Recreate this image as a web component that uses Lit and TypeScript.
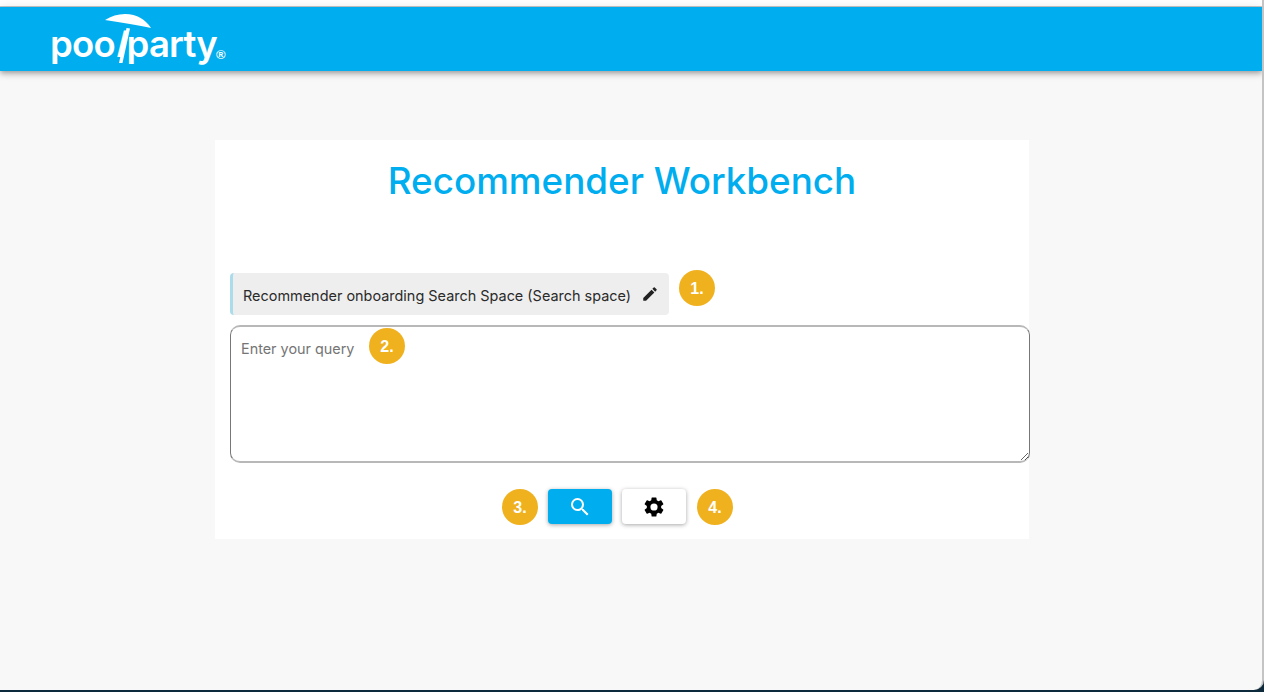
import { LitElement, html, css } from "lit";
import { customElement } from "lit/decorators.js";

@customElement("app-root")
export class AppRoot extends LitElement {
  static styles = css`
    :host { display: block; width: 1264px; height: 692px; overflow: hidden; background: #0d2a3c; font-family: Inter, "Liberation Sans", sans-serif; }
    .window { box-sizing: border-box; width: 1264px; height: 690px; background: #f8f8f8; border-right: 2px solid #c4c4c4; border-bottom-right-radius: 10px; display: flex; flex-direction: column; overflow: hidden; }
    .strip { height: 6px; background: #fff; border-bottom: 1px solid #c8c8c8; flex: none; }
    .bar { height: 64px; flex: none; background: #00aeef; box-shadow: 0 2px 4px -1px rgba(0,0,0,.2), 0 4px 5px 0 rgba(0,0,0,.14), 0 1px 10px 0 rgba(0,0,0,.12); padding-left: 50px; position: relative; z-index: 2; }
    .logo { position: relative; width: 176px; height: 64px; color: #fff; display: flex; align-items: baseline; padding-top: 13px; box-sizing: border-box; }
    .logo svg { position: absolute; left: 54px; top: 6px; }
    .word { font: 600 36.500px/48px Inter, sans-serif; letter-spacing: -0.8px; white-space: nowrap; }
    .pole { display: inline-block; transform: skewX(-14deg); transform-origin: 50% 75%; margin-right: 3px; }
    .reg { margin-left: -1px; font: 700 13px/10px "Liberation Sans", sans-serif; transform: translateY(2px); }
    main { flex: 1; padding: 69px 0 0 215px; }
    .card { box-sizing: border-box; position: relative; width: 814px; height: 399px; background: #fff; padding: 16px 0 0 15px; display: flex; flex-direction: column; }
    h1 { margin: 0; width: 784px; text-align: center; color: #00aeef; font: 500 36.800px/50px Inter, sans-serif; }
    .chip { box-sizing: border-box; margin-top: 67px; width: 439px; height: 42px; background: #eee; border-left: 3px solid #aadcec; border-radius: 4px; display: flex; align-items: center; padding: 2px 0 0 10px; gap: 10px; font-size: 14.440px; color: #2a2a2a; flex: none; }
    .chip svg { width: 18px; height: 18px; fill: #222; margin-top: -3px; }
    textarea { box-sizing: border-box; margin: 10px 0 0; width: 800px; height: 138px; flex: none; border: 1px solid #777; border-top: 2px solid #b8b8b8; border-bottom: 2px solid #b8b8b8; border-radius: 10px; padding: 13px 10px; font: 14.400px Inter, sans-serif; outline: none; background: #fff; display: block; }
    textarea::placeholder { color: #757575; opacity: 1; }
    .actions { display: flex; gap: 10px; margin: 26px 0 0 318px; }
    button { width: 64px; height: 35px; border: 0; border-radius: 4px; padding: 0; display: flex; align-items: center; justify-content: center; box-shadow: 0 1px 4px rgba(0,0,0,.35); background: #fff; }
    button.primary { background: #00aeef; }
    .badge { position: absolute; width: 36px; height: 36px; border-radius: 50%; background: #f0b11f; color: #fff; font: 700 16px/37px "Liberation Sans", sans-serif; text-align: center; }
    .b1 { left: 464px; top: 130px; }
    .b2 { left: 154px; top: 188px; }
    .b3 { left: 287px; top: 349px; }
    .b4 { left: 482px; top: 349px; }
  `;

  render() {
    return html`
      <div class="window">
        <div class="strip"></div>
        <header class="bar">
          <div class="logo">
            <span class="word">poo<span class="pole">l</span>party</span>
            <span class="reg">®</span>
            <svg width="56" height="56" viewBox="0 0 56 56">
              <path fill="#fff" d="M1 7 C7 3 14 1 21 1 C33 1 42 7 47 15 C35 12 18 10 1 7Z"/>
              <path fill="#fff" d="M22.500 15 L26 15.500 L18.500 50 L15 50Z" />
            </svg>
          </div>
        </header>
        <main>
          <section class="card">
            <h1>Recommender Workbench</h1>
            <div class="chip">
              <span>Recommender onboarding Search Space (Search space)</span>
              <svg viewBox="0 0 24 24"><path d="M3 17.250V21h3.750L17.810 9.940l-3.750-3.750L3 17.250zM20.710 7.040a1 1 0 0 0 0-1.410l-2.340-2.340a1 1 0 0 0-1.410 0l-1.830 1.830 3.750 3.750 1.830-1.830z"/></svg>
            </div>
            <textarea placeholder="Enter your query"></textarea>
            <div class="actions">
              <button class="primary" aria-label="Search">
                <svg width="24" height="24" viewBox="0 0 24 24" fill="#fff"><path d="M15.500 14h-.79l-.28-.27A6.470 6.470 0 0 0 16 9.500 6.500 6.500 0 1 0 9.500 16c1.610 0 3.090-.59 4.230-1.570l.27.28v.79l5 4.990L20.490 19l-4.990-5zm-6 0C7.010 14 5 11.990 5 9.500S7.010 5 9.500 5 14 7.010 14 9.500 11.990 14 9.500 14z"/></svg>
              </button>
              <button aria-label="Settings">
                <svg width="24" height="24" viewBox="0 0 24 24" fill="#000"><path d="M19.140 12.940c.04-.3.060-.61.060-.94 0-.32-.02-.64-.07-.94l2.030-1.580a.49.490 0 0 0 .12-.61l-1.920-3.320a.49.490 0 0 0-.59-.22l-2.390.96c-.5-.38-1.030-.7-1.620-.94l-.36-2.540a.48.480 0 0 0-.48-.41h-3.840a.47.470 0 0 0-.47.410l-.36 2.540c-.59.240-1.130.57-1.620.94l-2.390-.96a.48.480 0 0 0-.59.220L2.740 8.870a.47.470 0 0 0 .12.610l2.030 1.580c-.05.300-.09.630-.09.940s.02.640.07.940l-2.030 1.580a.49.490 0 0 0-.12.610l1.920 3.320c.12.220.37.290.59.220l2.390-.96c.5.380 1.030.7 1.620.94l.36 2.540c.05.240.24.410.48.410h3.840c.24 0 .44-.17.47-.41l.36-2.540c.59-.24 1.130-.56 1.620-.94l2.390.96c.22.080.47 0 .59-.22l1.920-3.320a.47.470 0 0 0-.12-.61l-2.010-1.580zM12 15.600A3.610 3.610 0 0 1 8.400 12 3.610 3.610 0 0 1 12 8.400a3.610 3.610 0 0 1 3.600 3.600 3.610 3.610 0 0 1-3.600 3.600z"/></svg>
              </button>
            </div>
            <span class="badge b1">1.</span>
            <span class="badge b2">2.</span>
            <span class="badge b3">3.</span>
            <span class="badge b4">4.</span>
          </section>
        </main>
      </div>
    `;
  }
}
